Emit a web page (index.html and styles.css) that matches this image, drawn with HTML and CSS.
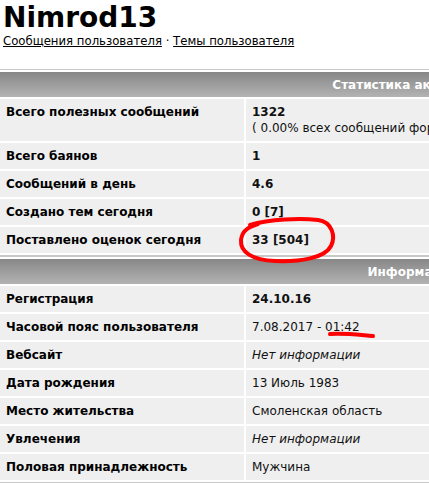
FILE: index.html
```html
<!DOCTYPE html>
<html lang="ru">
<head>
    <meta charset="UTF-8">
    <title>Nimrod13</title>
    <link rel="stylesheet" href="styles.css">
</head>
<body>

<div class="page">
    <h1 class="user-name">Nimrod13</h1>
    <div class="user-links">
        <a href="#">Сообщения пользователя</a> · <a href="#">Темы пользователя</a>
    </div>

    <!-- Статистика -->
    <table class="profile-table stats">
        <thead>
            <tr><th colspan="2">Статистика активности</th></tr>
        </thead>
        <tbody>
            <tr>
                <td class="label">Всего полезных сообщений</td>
                <td class="value"><b>1322</b><br>( 0.00% всех сообщений форума / 0 сообщений в день )</td>
            </tr>
            <tr>
                <td class="label">Всего баянов</td>
                <td class="value"><b>1</b></td>
            </tr>
            <tr>
                <td class="label">Сообщений в день</td>
                <td class="value"><b>4.6</b></td>
            </tr>
            <tr>
                <td class="label">Создано тем сегодня</td>
                <td class="value"><b>0 [7]</b></td>
            </tr>
            <tr>
                <td class="label">Поставлено оценок сегодня</td>
                <td class="value"><b>33 [504]</b></td>
            </tr>
        </tbody>
    </table>

    <!-- Информация -->
    <table class="profile-table info">
        <thead>
            <tr><th colspan="2">Информация</th></tr>
        </thead>
        <tbody>
            <tr>
                <td class="label">Регистрация</td>
                <td class="value"><b>24.10.16</b></td>
            </tr>
            <tr>
                <td class="label">Часовой пояс пользователя</td>
                <td class="value">7.08.2017 - 01:42</td>
            </tr>
            <tr>
                <td class="label">Вебсайт</td>
                <td class="value"><i>Нет информации</i></td>
            </tr>
            <tr>
                <td class="label">Дата рождения</td>
                <td class="value">13 Июль 1983</td>
            </tr>
            <tr>
                <td class="label">Место жительства</td>
                <td class="value">Смоленская область</td>
            </tr>
            <tr>
                <td class="label">Увлечения</td>
                <td class="value"><i>Нет информации</i></td>
            </tr>
            <tr>
                <td class="label">Половая принадлежность</td>
                <td class="value">Мужчина</td>
            </tr>
        </tbody>
    </table>

    <!-- marker scribbles drawn over the screenshot -->
    <svg class="marks" width="429" height="483" viewBox="0 0 429 483">
        <path d="M250 225 C270 219 300 218 318 220 C332 222 336 236 331 246 C325 258 300 262 275 261 C252 260 240 252 241 240 C242 231 248 227 258 224"
              fill="none" stroke="#f00" stroke-width="4" stroke-linecap="round"/>
        <path d="M330 334 C345 333 360 335 373 336"
              fill="none" stroke="#f00" stroke-width="4" stroke-linecap="round"/>
    </svg>
</div>

</body>
</html>
```

FILE: styles.css
```css
html, body {
    margin: 0;
    padding: 0;
    overflow: hidden;
    background-color: #fff;
}
body {
    font-family: "DejaVu Sans", Verdana, sans-serif;
    font-size: 12px;
    color: #000;
}
.page {
    position: relative;
    width: 829px;
}
.user-name {
    font-size: 28px;
    font-weight: bold;
    margin: 0;
    padding: 2px 0 0 3px;
    line-height: 32px;
}
.user-links {
    padding-left: 3px;
    font-size: 11.7px;
    line-height: 15px;
    margin-bottom: 20px;
}
.user-links a {
    color: #000;
}
.profile-table {
    width: 829px;
    margin-left: -2px;
    border-collapse: separate;
    border-spacing: 2px;
    border-top: 1px solid #c8c8c8;
    border-bottom: 1px solid #c8c8c8;
}
.profile-table th {
    height: 25px;
    padding: 0;
    background: linear-gradient(#878787, #b3b3b3);
    color: #fff;
    font-weight: bold;
    text-align: center;
    vertical-align: middle;
}
.profile-table td {
    background-color: #efefef;
    padding: 5px 6px;
    line-height: 16px;
    vertical-align: top;
    white-space: nowrap;
}
.profile-table td.label {
    width: 232px;
    font-weight: bold;
}
.profile-table td.value {
    color: #111;
}
.marks {
    position: absolute;
    left: 0;
    top: 0;
    pointer-events: none;
}
```
